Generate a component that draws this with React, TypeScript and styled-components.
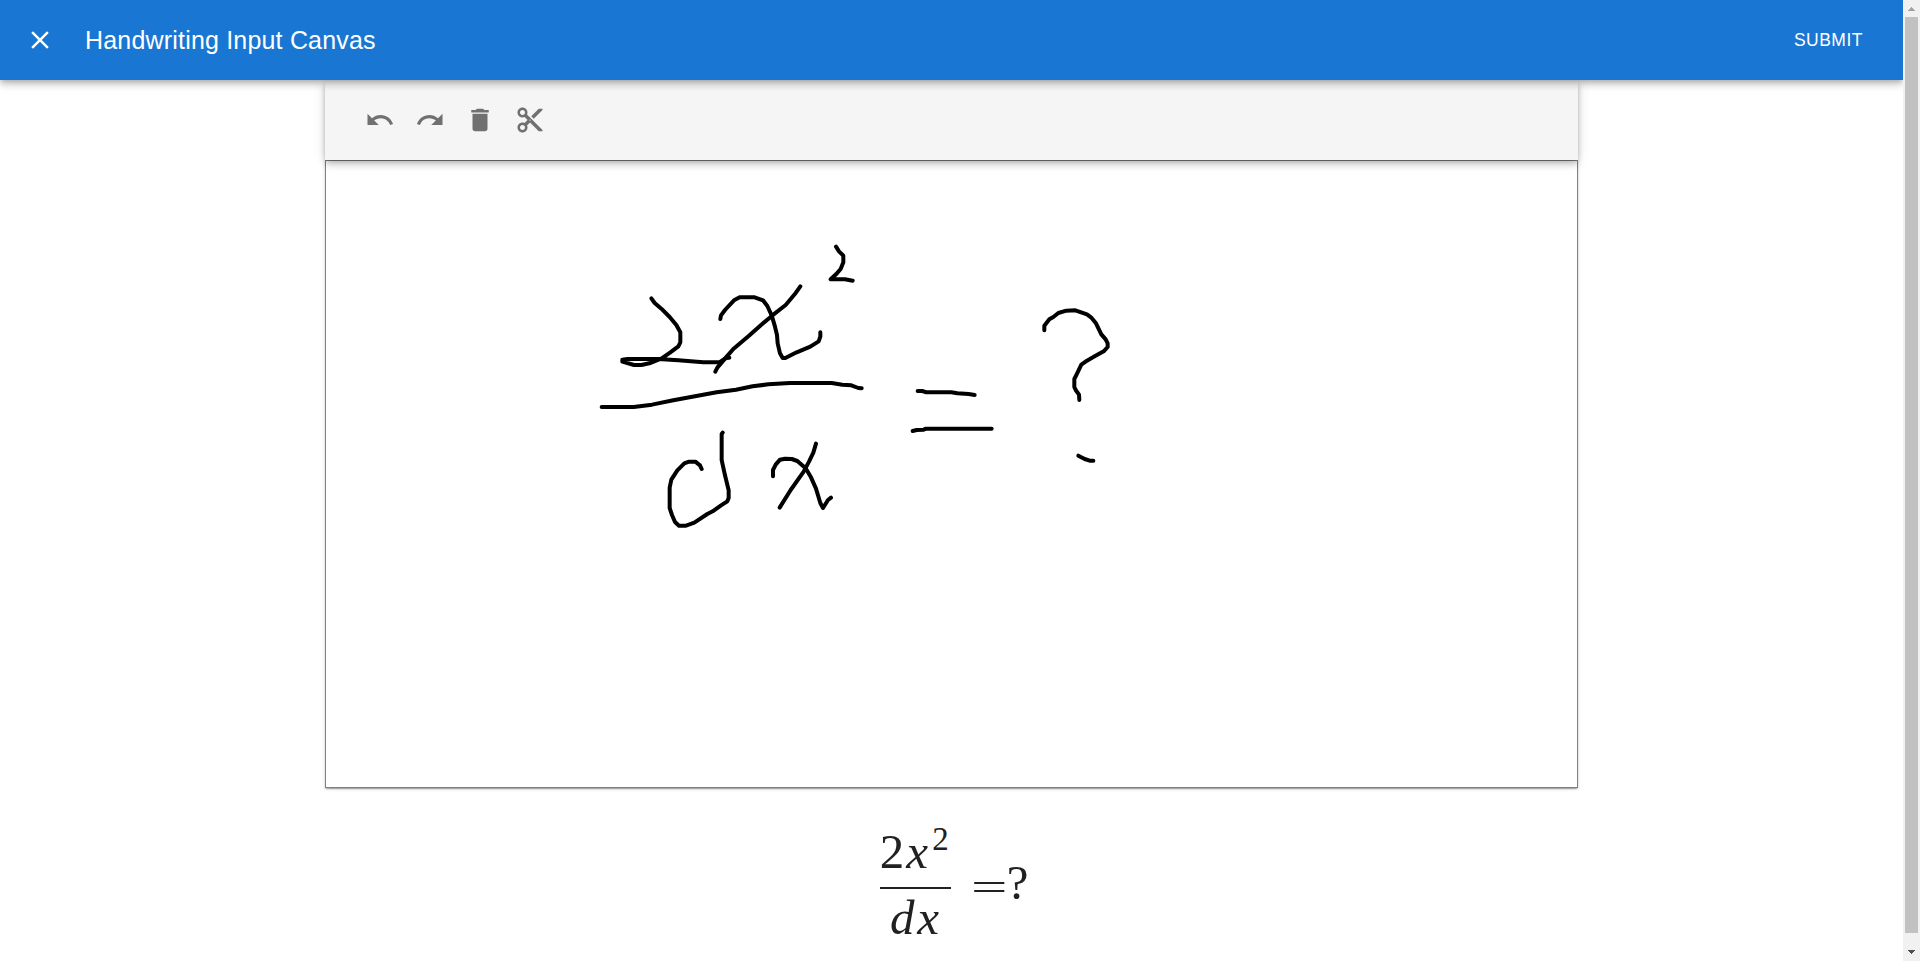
import React from "react";
import styled, { createGlobalStyle } from "styled-components";
import { MdClose, MdContentCut, MdDelete, MdRedo, MdUndo } from "react-icons/md";

const GlobalStyle = createGlobalStyle`
  *, *::before, *::after { box-sizing: border-box; }
  body {
    margin: 0;
    background: #fff;
    color: #212121;
    font-family: "Liberation Sans", Arial, sans-serif;
    overflow: hidden;
  }
`;

const Window = styled.div`
  display: flex;
  height: 961px;
`;

const Page = styled.div`
  flex: 1;
  min-width: 0;
  overflow: hidden;
`;

const AppBar = styled.header`
  position: relative;
  z-index: 2;
  display: flex;
  align-items: center;
  height: 80px;
  padding: 0 30px 0 15px;
  background: #1976d2;
  color: #fff;
  box-shadow: 0 2.5px 5px -1.25px rgba(0, 0, 0, 0.2), 0 5px 6.25px rgba(0, 0, 0, 0.14),
    0 1.25px 12.5px rgba(0, 0, 0, 0.12);
`;

const IconButton = styled.button<{ $tone?: string }>`
  display: inline-flex;
  width: 50px;
  height: 50px;
  padding: 10px;
  border: 0;
  border-radius: 50%;
  background: none;
  color: ${(p) => p.$tone ?? "rgba(0, 0, 0, 0.54)"};
  font-size: 30px;
`;

const Title = styled.h1`
  flex: 1;
  margin: 0 0 0 20px;
  font-size: 25px;
  font-weight: 400;
  line-height: 40px;
  letter-spacing: 0.1875px;
`;

const SubmitButton = styled.button`
  padding: 7.5px 10px;
  border: 0;
  background: none;
  color: inherit;
  font: 400 17.5px/30.6px "Liberation Sans", Arial, sans-serif;
  letter-spacing: 0.5px;
  text-transform: uppercase;
`;

const Main = styled.main`
  width: 1253px;
  margin: 0 auto;
`;

const Toolbar = styled.div`
  position: relative;
  z-index: 1;
  display: flex;
  align-items: center;
  height: 80px;
  padding: 0 30px;
  background: #f5f5f5;
  box-shadow: 0 2.5px 5px -1.25px rgba(0, 0, 0, 0.2), 0 5px 6.25px rgba(0, 0, 0, 0.14),
    0 1.25px 12.5px rgba(0, 0, 0, 0.12);
`;

const Canvas = styled.div`
  height: 628px;
  border: 1px solid #808080;
  background: #fff;
  box-shadow: 0 2.5px 1.25px -1.25px rgba(0, 0, 0, 0.2), 0 1.25px 1.25px rgba(0, 0, 0, 0.14),
    0 1.25px 3.75px rgba(0, 0, 0, 0.12);
`;

const Ink = styled.svg`
  display: block;
  width: 1251px;
  height: 626px;
  fill: none;
  stroke: #000;
  stroke-width: 12;
  stroke-linecap: round;
  stroke-linejoin: round;
`;

const Formula = styled.div`
  display: flex;
  justify-content: center;
  margin-top: 33px;
  padding-left: 5px;
  font-family: "Liberation Serif", "Times New Roman", serif;
  font-size: 49px;
  line-height: 56px;
`;

const Fraction = styled.div`
  display: flex;
  flex-direction: column;
  width: 71px;
`;

const Numerator = styled.div`
  display: flex;
  height: 68px;
  padding-top: 3px;
  border-bottom: 2px solid #212121;
`;

const Denominator = styled.div`
  display: flex;
  justify-content: center;
  padding-top: 1px;
`;

const Variable = styled.i`
  display: inline-block;
  width: 26px;
  text-align: center;
`;

const Exponent = styled.sup`
  font-size: 33px;
  line-height: 32px;
  margin-top: -1px;
  margin-left: 2px;
`;

const Relation = styled.span`
  margin: 40px 0 0 20px;
  width: 33px;
  transform: scale(1.32, 0.82);
  transform-origin: 0 23px;
`;

const Question = styled.span`
  margin: 34px 0 0 3px;
`;

const ScrollTrack = styled.div`
  display: flex;
  flex-direction: column;
  align-items: center;
  width: 17px;
  background: #f1f1f1;
`;

const ScrollArrow = styled.svg<{ $h: number }>`
  flex: none;
  width: 17px;
  height: ${(p) => p.$h}px;
`;

const ScrollThumb = styled.div`
  width: 13px;
  height: 916px;
  background: #c1c1c1;
`;

type StrokeGroup = { x: number; y: number; strokes: string[] };

const strokeGroups: StrokeGroup[] = [
  {
    x: 590,
    y: 230,
    strokes: [
      "M184 205L194 219L214 236L239 261L259 285L271 307V337L265 349L241 367L215 385L178 400L154 405H132L97 395V389L112 387H205L265 391L340 397H388L408 384L418 383",
      "M391 267L393 256L405 240L432 211L449 202H494L519 211L532 228L545 256L555 290L561 315L563 340L570 370L578 384H586L620 367L661 350L686 334L691 320V307",
      "M631 169L614 193L587 225L550 254L514 284L476 318L430 357L410 380L382 413L376 425",
      "M738 50L747 64L760 77V97L752 117L738 133L722 148H765L788 152",
      "M35 531H131L186 524L250 511L315 499L380 487L438 479L488 469L535 463L600 459H725L757 464L784 466L805 474L815 475",
    ],
  },
  {
    x: 640,
    y: 400,
    strokes: [
      "M185 207L180 196L166 185H147L133 190L112 211L94 239L89 263V324L96 345L105 366L117 377H138L163 368L202 342L218 334L242 317L262 304L266 294V271L255 226L245 180V102L248 98",
      "M399 229V210L407 194L420 179L435 176L455 177L472 183L497 205L513 232L528 266L541 309L549 324L564 300L573 293",
      "M528 131L520 158L507 185L491 215L452 270L419 323",
    ],
  },
  {
    x: 890,
    y: 290,
    strokes: [
      "M83 303H97L109 307H184L202 310L236 312L254 315",
      "M68 423L80 420L101 419L108 416H305",
      "M463 121V107L478 88L490 81L505 69L529 62L556 61L591 73L603 82L618 100L634 133L647 148L653 160V171L641 184L614 199L591 212L574 224L560 253L553 267V291L557 300L567 314L568 330",
      "M565 497L584 507L599 512H610",
    ],
  },
];

export default function App() {
  return (
    <>
      <GlobalStyle />
      <Window>
        <Page>
          <AppBar>
            <IconButton $tone="#fff" aria-label="close">
              <MdClose />
            </IconButton>
            <Title>Handwriting Input Canvas</Title>
            <SubmitButton>Submit</SubmitButton>
          </AppBar>
          <Main>
            <Toolbar>
              <IconButton aria-label="undo">
                <MdUndo />
              </IconButton>
              <IconButton aria-label="redo">
                <MdRedo />
              </IconButton>
              <IconButton aria-label="clear">
                <MdDelete />
              </IconButton>
              <IconButton aria-label="cut">
                <MdContentCut />
              </IconButton>
            </Toolbar>
            <Canvas>
              <Ink viewBox="326 161 1251 626">
                {strokeGroups.map((g) => (
                  <g key={g.x} transform={`translate(${g.x} ${g.y}) scale(0.33333)`}>
                    {g.strokes.map((d) => (
                      <path key={d} d={d} />
                    ))}
                  </g>
                ))}
              </Ink>
            </Canvas>
            <Formula>
              <Fraction>
                <Numerator>
                  <span>2</span>
                  <Variable>x</Variable>
                  <Exponent>2</Exponent>
                </Numerator>
                <Denominator>
                  <Variable>d</Variable>
                  <Variable>x</Variable>
                </Denominator>
              </Fraction>
              <Relation>=</Relation>
              <Question>?</Question>
            </Formula>
          </Main>
        </Page>
        <ScrollTrack>
          <ScrollArrow $h={17} viewBox="0 0 17 17" shapeRendering="crispEdges">
            <path fill="#a3a3a3" d="M8 7h1v1h1v1h1v1h1v1H5v-1h1V9h1V8h1z" />
          </ScrollArrow>
          <ScrollThumb />
          <ScrollArrow $h={28} viewBox="0 0 17 28" shapeRendering="crispEdges">
            <path fill="#505050" d="M5 17h7v1h-1v1h-1v1H9v1H8v-1H7v-1H6v-1H5z" />
          </ScrollArrow>
        </ScrollTrack>
      </Window>
    </>
  );
}
